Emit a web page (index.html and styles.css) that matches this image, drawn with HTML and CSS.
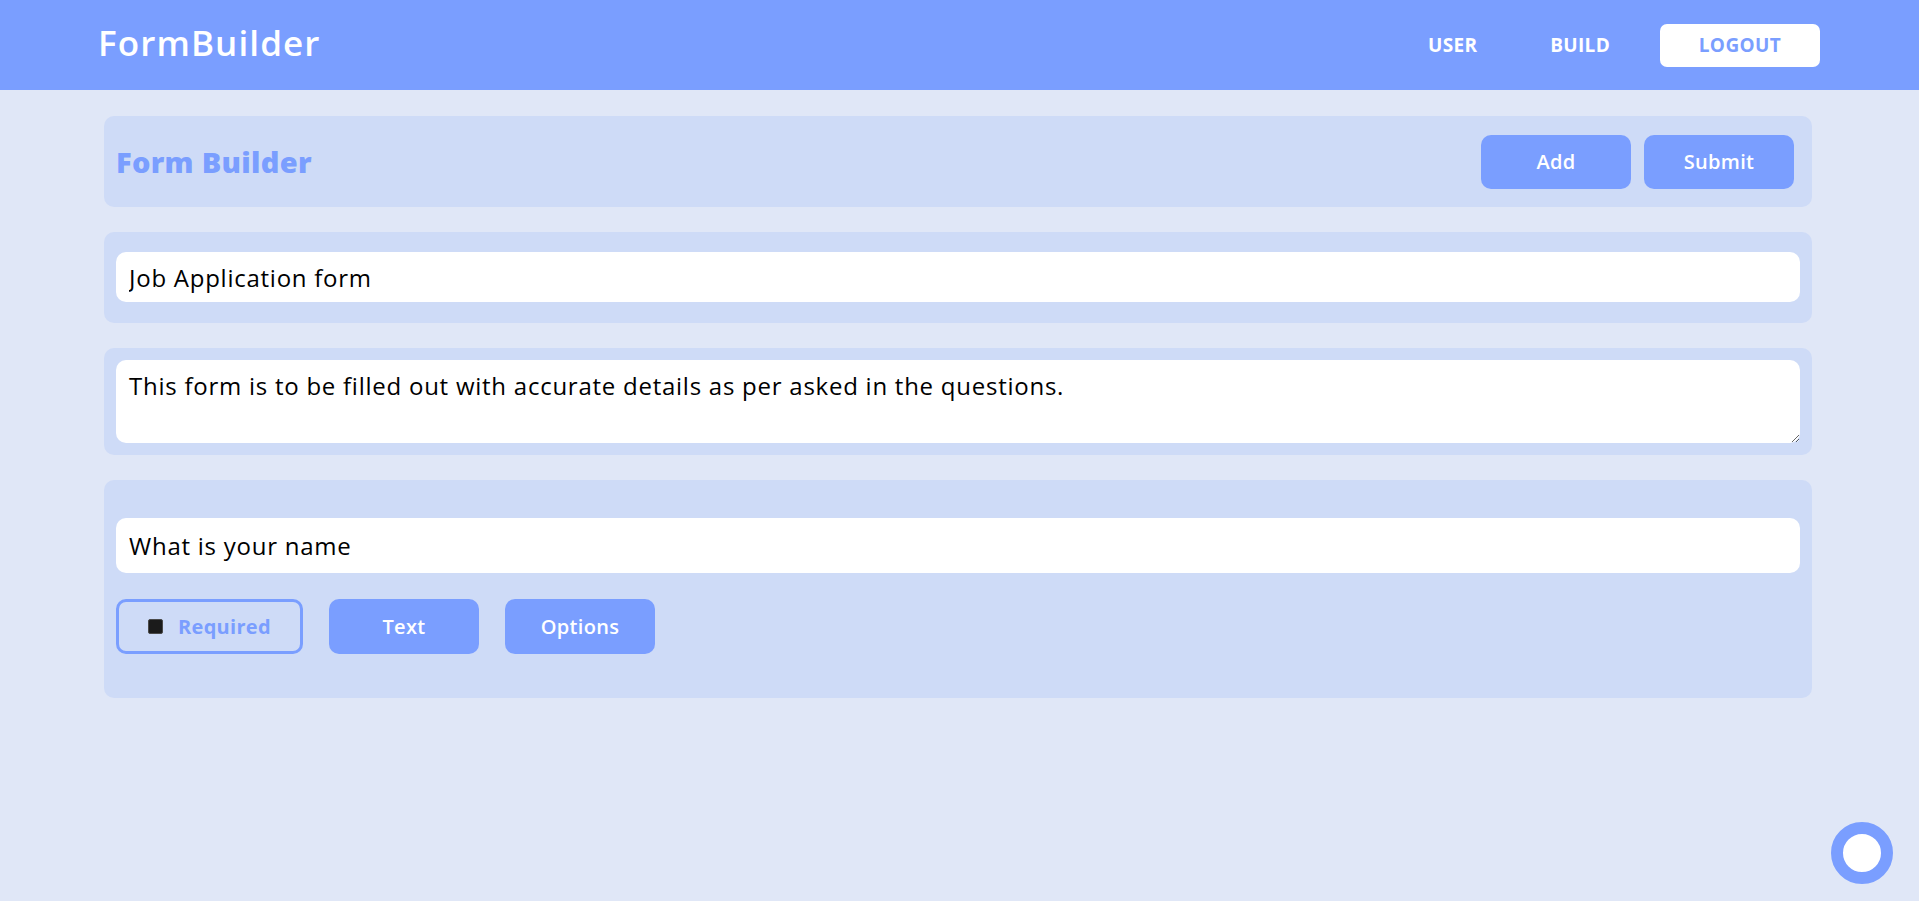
FILE: index.html
```html
<!DOCTYPE html>
<html lang="en">
<head>
<meta charset="utf-8">
<title>FormBuilder</title>
<link rel="stylesheet" href="styles.css">
</head>
<body>
<header class="topbar">
  <div class="logo">FormBuilder</div>
  <nav class="nav">
    <a class="nav-link nav-user" href="#">USER</a>
    <a class="nav-link nav-build" href="#">BUILD</a>
    <a class="nav-logout" href="#">LOGOUT</a>
  </nav>
</header>
<main class="content">
  <section class="card card-head">
    <h1 class="page-title">Form Builder</h1>
    <div class="head-actions">
      <button class="btn">Add</button>
      <button class="btn">Submit</button>
    </div>
  </section>
  <section class="card card-title">
    <input class="field field-title" type="text" value="Job Application form">
  </section>
  <section class="card card-desc">
    <textarea class="field field-desc">This form is to be filled out with accurate details as per asked in the questions.</textarea>
  </section>
  <section class="card card-question">
    <input class="field field-question" type="text" value="What is your name">
    <div class="q-actions">
      <label class="btn-outline"><input class="check" type="checkbox"><span>Required</span></label>
      <button class="btn btn-sm">Text</button>
      <button class="btn btn-sm">Options</button>
    </div>
  </section>
</main>
<div class="fab"></div>
</body>
</html>
```

FILE: styles.css
```css
* { box-sizing: border-box; }
html, body { margin: 0; padding: 0; }
body {
  background: #e0e7f7;
  font-family: "Open Sans", "DejaVu Sans", sans-serif;
  min-height: 901px;
}
.topbar {
  height: 90px;
  background: #7a9eff;
  display: flex;
  align-items: center;
  justify-content: space-between;
  padding: 0 99px 0 98px;
}
.logo {
  color: #fff;
  font-size: 35px;
  font-weight: 600;
  letter-spacing: 1.1px;
  margin-bottom: 5px;
}
.nav { display: flex; align-items: center; }
.nav-link {
  color: #fff;
  text-decoration: none;
  font-size: 19px;
  font-weight: 700;
  letter-spacing: 0.3px;
}
.nav-user { margin-right: 73px; }
.nav-build { margin-right: 50px; }
.nav-logout {
  width: 160px;
  height: 43px;
  background: #fff;
  color: #7a9eff;
  border-radius: 7px;
  display: flex;
  align-items: center;
  justify-content: center;
  text-decoration: none;
  font-size: 19px;
  font-weight: 700;
  letter-spacing: 0.4px;
}
.content {
  padding: 26px 0 0 104px;
  display: flex;
  flex-direction: column;
  align-items: flex-start;
  gap: 25px;
}
.card {
  width: 1708px;
  background: #cedbf7;
  border-radius: 10px;
}
.card-head {
  height: 91px;
  display: flex;
  align-items: center;
  justify-content: space-between;
  padding: 0 18px 0 12px;
}
.page-title {
  margin: 0;
  color: #7a9eff;
  font-size: 29px;
  font-weight: 800;
  letter-spacing: 0.3px;
}
.head-actions { display: flex; gap: 13px; }
.btn {
  width: 150px;
  height: 54px;
  border: none;
  border-radius: 10px;
  background: #7a9eff;
  color: #fff;
  font-family: "Open Sans", "DejaVu Sans", sans-serif;
  font-size: 20px;
  font-weight: 600;
  letter-spacing: 0.3px;
  padding: 0;
}
.card-title { padding: 20px 12px 21px; }
.field {
  display: block;
  width: 100%;
  border: none;
  outline: none;
  background: #fff;
  border-radius: 10px;
  color: #000;
  font-family: "Open Sans", "DejaVu Sans", sans-serif;
  font-size: 24px;
  letter-spacing: 0.75px;
  padding: 0 13px;
}
.field-title { height: 50px; }
.card-desc { padding: 12px; }
.field-desc {
  height: 83px;
  line-height: 36px;
  padding: 8px 13px;
  resize: vertical;
}
.card-question { padding: 38px 12px 44px; }
.field-question { height: 55px; }
.q-actions {
  display: flex;
  gap: 26px;
  margin-top: 26px;
}
.btn-sm { width: 150px; height: 55px; }
.btn-outline {
  width: 187px;
  height: 55px;
  border: 3px solid #7a9eff;
  border-radius: 10px;
  display: flex;
  align-items: center;
  justify-content: center;
  gap: 15px;
  color: #7a9eff;
  font-size: 20px;
  font-weight: 700;
  letter-spacing: 0.3px;
}
.check {
  appearance: none;
  -webkit-appearance: none;
  margin: 0;
  width: 15px;
  height: 15px;
  background: #1b1b1b;
  border: 1px solid #4a4a4a;
  border-radius: 2px;
}
.fab {
  position: fixed;
  right: 26px;
  bottom: 17px;
  width: 62px;
  height: 62px;
  border-radius: 50%;
  border: 12px solid #7a9eff;
  background: #fff;
}
```
